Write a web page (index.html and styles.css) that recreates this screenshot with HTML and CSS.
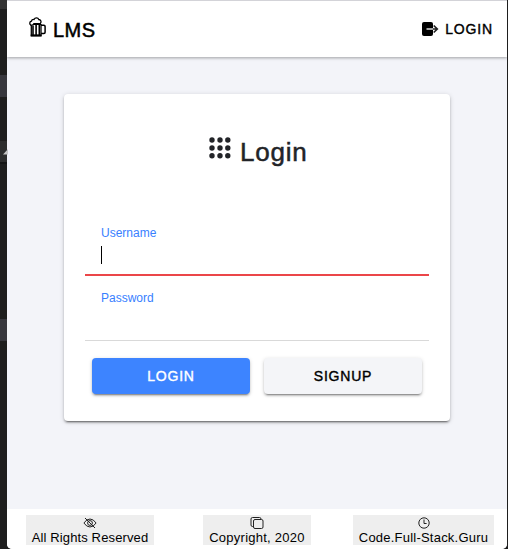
FILE: index.html
```html
<!DOCTYPE html>
<html lang="en">
<head>
<meta charset="utf-8">
<title>LMS</title>
<link rel="stylesheet" href="styles.css">
</head>
<body>
<div class="backdrop"><svg class="fold" width="6" height="6" viewBox="0 0 6 6"><path d="M1 5.5 6 0v5.5z" fill="#c5c5c5"/></svg></div>
<div class="window">
  <header class="bar">
    <div class="brand">
      <svg class="beer" width="18" height="20" viewBox="0 0 18 20" fill="none" stroke="#000" stroke-width="1.3">
        <path d="M2.300 7.500v11H12V7"/><path d="M1.700 18.400h10.800" stroke-width="2"/>
        <path d="M4 8.500v9.500M7.100 7.500v11M10.300 7.500v11" stroke-width="1.600"/>
        <path d="M2 8.300C.2 7 .4 4.700 2.400 4.200 2.800 2.800 4 2.300 5 2.500 6 .4 9 .4 9.800 2.500c1.900.1 2.800 2.200 1.700 3.700-.7.9-2.100.7-2.500.5H5.100c-.3 1.300-1.900 1.500-3.100 1.600z" fill="#fff"/>
        <path d="M4.500 7.200H12" stroke-width="1.800"/>
        <path d="M12 8.300h2.900q1.200 0 1.200 1.200v5.800q0 1.200-1.200 1.200H12" stroke-width="1.500"/>
      </svg>
      <span class="brand-name">LMS</span>
    </div>
    <a class="nav-login">
      <svg width="18" height="16" viewBox="0 0 18 16"><rect x="1" y="1" width="11" height="14" rx="2" fill="#000"/><path d="M5.500 8H12" stroke="#ddd" stroke-width="1.400"/><path d="M12 8h4.200M12.700 4.500 16.300 8l-3.600 3.500" fill="none" stroke="#222" stroke-width="1.700"/></svg>
      <span class="nav-text">LOGIN</span>
    </a>
  </header>
  <main>
    <form class="card">
      <h1>
        <svg width="22" height="22" viewBox="0 0 22 22" fill="#222428"><circle cx="3" cy="3" r="2.700"/><circle cx="11" cy="3" r="2.700"/><circle cx="18.800" cy="3" r="2.700"/><circle cx="3" cy="11" r="2.700"/><circle cx="11" cy="11" r="2.700"/><circle cx="18.800" cy="11" r="2.700"/><circle cx="3" cy="18.800" r="2.700"/><circle cx="11" cy="18.800" r="2.700"/><circle cx="18.800" cy="18.800" r="2.700"/></svg>
        <span>Login</span>
      </h1>
      <div class="field active"><label>Username</label><div class="caret"></div></div>
      <div class="field"><label>Password</label></div>
      <div class="actions">
        <button type="button" class="btn primary"><span>LOGIN</span></button>
        <button type="button" class="btn light"><span>SIGNUP</span></button>
      </div>
    </form>
  </main>
  <footer>
    <div class="note rights">
      <svg width="14" height="12" viewBox="0 0 14 12" fill="none" stroke="#222" stroke-width="1"><path d="M.9 6Q3.600 2 7 2t6.100 4Q10.400 10 7 10T.9 6z"/><circle cx="7" cy="6" r="2.400"/><path d="M2 1l10 10"/></svg>
      <span>All Rights Reserved</span>
    </div>
    <div class="note copy">
      <svg width="14" height="12" viewBox="0 0 14 12" fill="none" stroke="#222" stroke-width="1"><rect x="3.500" y="2.500" width="9.500" height="9" rx="1.500"/><path d="M11 2.300V2Q11 .5 9.500 .5H2.500Q1 .5 1 2v6q0 1.500 1.500 1.500h1"/></svg>
      <span>Copyright, 2020</span>
    </div>
    <div class="note site">
      <svg width="14" height="12" viewBox="0 0 14 12" fill="none" stroke="#222" stroke-width="1"><circle cx="7" cy="6" r="5.200"/><path d="M7 2.500v4h2.600"/></svg>
      <span>Code.Full-Stack.Guru</span>
    </div>
  </footer>
</div>
</body>
</html>
```
FILE: styles.css
```css
* { box-sizing: border-box; }
body {
  margin: 0;
  width: 508px;
  height: 549px;
  overflow: hidden;
  display: flex;
  background: #1e1e1e;
  font-family: "Liberation Sans", Arial, sans-serif;
  color: #000;
}
.backdrop {
  width: 7px;
  position: relative;
  background: linear-gradient(#333 0 9px, #1e1e1e 9px 75px, #37373d 75px 97px, #1e1e1e 97px 141px, #2d2d2d 141px 162px, #151515 162px 164px, #1e1e1e 164px 319px, #37373d 319px 341px, #1e1e1e 341px);
}
.fold { position: absolute; left: 2px; top: 149px; }
.window {
  width: 500px;
  height: 549px;
  display: flex;
  flex-direction: column;
  background: #f3f4f9;
  border-top: 1px solid #d3d3d8;
  border-radius: 0 0 5px 5px;
  overflow: hidden;
}
.bar {
  height: 56px;
  flex: none;
  display: flex;
  justify-content: space-between;
  background: #fff;
  padding: 0 14px 0 22px;
  box-shadow: 0 1px 3px rgba(0, 0, 0, .35);
}
.brand { display: flex; }
.beer { margin-top: 16px; }
.brand-name {
  margin: 18px 0 0 6px;
  font-size: 20px;
  line-height: 23px;
  letter-spacing: .5px;
  -webkit-text-stroke: .5px #000;
}
.nav-login { display: flex; }
.nav-login svg { margin-top: 20px; }
.nav-text {
  margin: 20px 0 0 6px;
  font-size: 14px;
  line-height: 16px;
  letter-spacing: .85px;
  -webkit-text-stroke: .4px #000;
}
main { flex: 1; padding: 37px 57px 0; }
.card {
  width: 386px;
  height: 327px;
  padding: 0 21px;
  background: #fff;
  border-radius: 4px;
  box-shadow: 0 3px 1px -2px rgba(0, 0, 0, .3), 0 2px 2px 0 rgba(0, 0, 0, .22), 0 1px 5px 0 rgba(0, 0, 0, .16);
}
h1 {
  margin: 0;
  height: 117px;
  padding: 43px 0 0 124px;
  display: flex;
  font-size: 26px;
  line-height: 30px;
  font-weight: 400;
  color: #222428;
  -webkit-text-stroke: .5px #222428;
}
h1 span { margin-left: 9px; letter-spacing: .75px; }
.field {
  height: 65px;
  padding: 14px 16px 0;
  border-bottom: 1px solid #d9d9d9;
}
.field.active { border-bottom: 2px solid #eb4649; }
label {
  display: block;
  font-size: 12px;
  line-height: 16px;
  color: #3880ff;
}
.caret { width: 1px; height: 18px; margin-top: 5px; background: #000; }
.actions { display: flex; gap: 14px; padding: 17px 7px 0; }
.btn {
  flex: none;
  width: 158px;
  height: 36px;
  padding: 0;
  border: 0;
  border-radius: 4px;
  font: 14px/36px "Liberation Sans", Arial, sans-serif;
  letter-spacing: .8px;
  box-shadow: 0 3px 1px -2px rgba(0, 0, 0, .25), 0 2px 2px 0 rgba(0, 0, 0, .18), 0 1px 4px 0 rgba(0, 0, 0, .14);
}
.primary { background: #3d84ff; color: #fff; -webkit-text-stroke: .4px #fff; }
.light { background: #f4f5f8; color: #000; -webkit-text-stroke: .4px #000; }
footer {
  height: 40px;
  flex: none;
  display: flex;
  padding: 6px 13px 0 19px;
  background: #fff;
}
.note {
  height: 30px;
  display: flex;
  flex-direction: column;
  align-items: center;
  padding-top: 2px;
  background: #eee;
  font-size: 13px;
  line-height: 15px;
  letter-spacing: .13px;
  white-space: nowrap;
}
.note svg { flex: none; }
.note span { margin-top: 1px; }
.rights { width: 128px; }
.copy { width: 108px; margin: 0 42px 0 49px; letter-spacing: .25px; }
.site { width: 141px; letter-spacing: .22px; }
```
